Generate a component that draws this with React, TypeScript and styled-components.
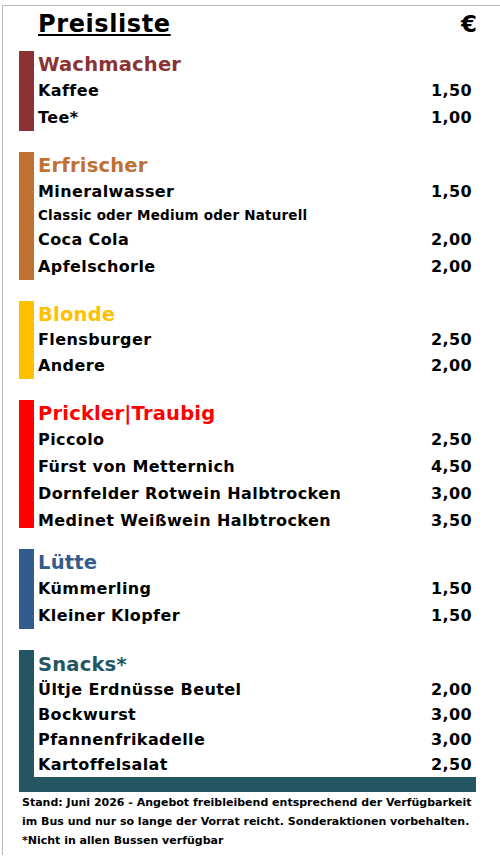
import { createGlobalStyle } from "styled-components";
import styled from "styled-components";

const GlobalStyle = createGlobalStyle`
    body {
        margin: 0;
        background: #fff;
        color: #000;
        font-family: "DejaVu Sans", Verdana, sans-serif;
        font-weight: bold;
    }
`;

const Frame = styled.div`
    margin: 5px 0 0 2px;
    border-top: 1px solid #b8b8b8;
    border-left: 1px solid #b8b8b8;
    min-height: 850px;
    box-sizing: border-box;
`;

const Header = styled.header`
    display: flex;
    justify-content: space-between;
    align-items: baseline;
    padding: 3px 23px 0 35px;
    height: 30px;
    line-height: 30px;
    margin-bottom: 12px;
    font-size: 23px;
`;

const Heading = styled.h1`
    margin: 0;
    font-size: 24px;
    letter-spacing: 0.6px;
    text-decoration: underline;
    text-decoration-thickness: 2px;
    text-underline-offset: 2px;
`;

const Sections = styled.div`
    display: flex;
    flex-direction: column;
    gap: 21px;
    padding-left: 16px;
    width: 457px;
`;

const Section = styled.section<{ $color: string; $h?: number; $foot?: boolean }>`
    border-left: 15px solid ${(p) => p.$color};
    border-bottom: ${(p) => (p.$foot ? `15px solid ${p.$color}` : "none")};
    padding: 0 4px;
    height: ${(p) => (p.$h ? `${p.$h}px` : "auto")};
`;

const SectionTitle = styled.h2<{ $color: string; $pt: number }>`
    margin: 0;
    padding-top: ${(p) => p.$pt}px;
    height: 24px;
    line-height: 24px;
    font-size: 19.5px;
    letter-spacing: 0.2px;
    color: ${(p) => p.$color};
`;

const Row = styled.div<{ $h: number }>`
    display: flex;
    justify-content: space-between;
    height: ${(p) => p.$h}px;
    line-height: ${(p) => p.$h}px;
    font-size: 16px;
    letter-spacing: 0.4px;
    white-space: nowrap;
`;

const Note = styled.div`
    height: 21px;
    line-height: 21px;
    font-size: 13.5px;
    letter-spacing: 0.2px;
`;

const Footer = styled.footer`
    padding: 1px 0 0 19px;
    font-size: 11px;
    line-height: 19px;
    white-space: nowrap;
`;

type Item = { name: string; price: string; note?: string };
type Group = { title: string; color: string; rowH: number; pt?: number; h?: number; foot?: boolean; items: Item[] };

const groups: Group[] = [
    {
        title: "Wachmacher", color: "#8c3234", rowH: 27,
        items: [{ name: "Kaffee", price: "1,50" }, { name: "Tee*", price: "1,00" }],
    },
    {
        title: "Erfrischer", color: "#be7133", rowH: 27,
        items: [
            { name: "Mineralwasser", price: "1,50", note: "Classic oder Medium oder Naturell" },
            { name: "Coca Cola", price: "2,00" },
            { name: "Apfelschorle", price: "2,00" },
        ],
    },
    {
        title: "Blonde", color: "#ffc000", rowH: 26,
        items: [{ name: "Flensburger", price: "2,50" }, { name: "Andere", price: "2,00" }],
    },
    {
        title: "Prickler|Traubig", color: "#ff0000", rowH: 27, h: 128,
        items: [
            { name: "Piccolo", price: "2,50" },
            { name: "Fürst von Metternich", price: "4,50" },
            { name: "Dornfelder Rotwein Halbtrocken", price: "3,00" },
            { name: "Medinet Weißwein Halbtrocken", price: "3,50" },
        ],
    },
    {
        title: "Lütte", color: "#325c8e", rowH: 27,
        items: [{ name: "Kümmerling", price: "1,50" }, { name: "Kleiner Klopfer", price: "1,50" }],
    },
    {
        title: "Snacks*", color: "#245563", rowH: 25, pt: 3, foot: true,
        items: [
            { name: "Ültje Erdnüsse Beutel", price: "2,00" },
            { name: "Bockwurst", price: "3,00" },
            { name: "Pfannenfrikadelle", price: "3,00" },
            { name: "Kartoffelsalat", price: "2,50" },
        ],
    },
];

const App = () => {
    return (
        <>
            <GlobalStyle />
            <Frame>
                <Header>
                    <Heading>Preisliste</Heading>
                    <span>€</span>
                </Header>
                <Sections>
                    {groups.map((g) => (
                        <Section key={g.title} $color={g.color} $h={g.h} $foot={g.foot}>
                            <SectionTitle $color={g.color} $pt={g.pt ?? 2}>{g.title}</SectionTitle>
                            {g.items.map((item) => (
                                <div key={item.name}>
                                    <Row $h={g.rowH}>
                                        <span>{item.name}</span>
                                        <span>{item.price}</span>
                                    </Row>
                                    {item.note && <Note>{item.note}</Note>}
                                </div>
                            ))}
                        </Section>
                    ))}
                </Sections>
                <Footer>
                    Stand: Juni 2026 - Angebot freibleibend entsprechend der Verfügbarkeit
                    <br />
                    im Bus und nur so lange der Vorrat reicht. Sonderaktionen vorbehalten.
                    <br />
                    *Nicht in allen Bussen verfügbar
                </Footer>
            </Frame>
        </>
    );
};

export default App;
